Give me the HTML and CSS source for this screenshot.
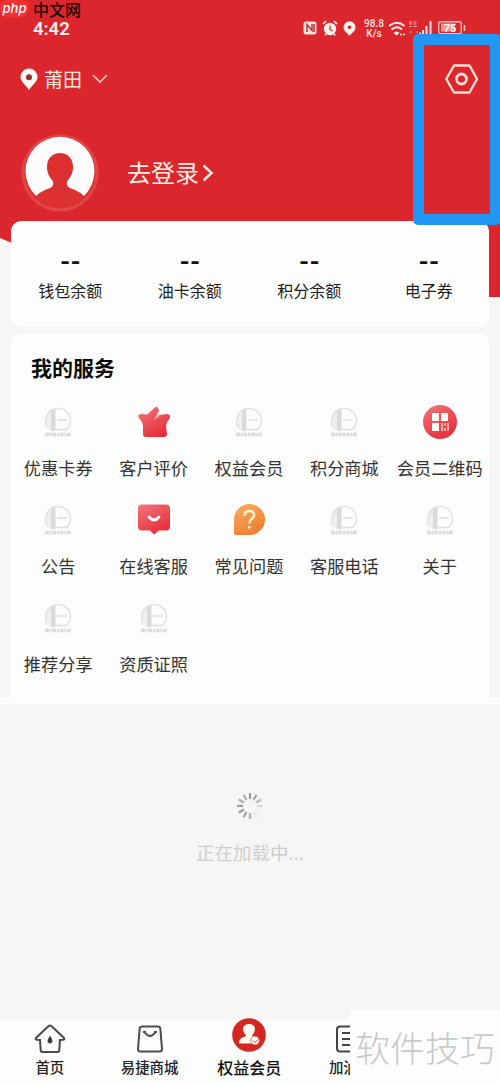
FILE: index.html
```html
<!DOCTYPE html>
<html lang="zh-CN">
<head>
<meta charset="utf-8">
<title>我的</title>
<link rel="stylesheet" href="styles.css">
</head>
<body>
<svg class="defs" width="0" height="0">
  <defs>
    <linearGradient id="red" x1="0" y1="0" x2="0.6" y2="1"><stop offset="0" stop-color="#ef797b"/><stop offset="1" stop-color="#e92d3a"/></linearGradient>
    <linearGradient id="orange" x1="0" y1="0" x2="0.5" y2="1"><stop offset="0" stop-color="#f8b064"/><stop offset="1" stop-color="#ef7f31"/></linearGradient>
    <symbol id="blank" viewBox="0 0 34 34">
      <path d="M6 24C3 16 5 8 11 5v21z" fill="#efefef"/>
      <rect x="10" y="4" width="4.500" height="22" fill="#dadada"/>
      <path d="M5 22C3 10 9 3.500 17 3.500c9 0 14 7.500 12 16l-3 5" fill="none" stroke="#e2e2e2" stroke-width="1.500"/>
      <path d="M16 15h10M15 24.500h11" fill="none" stroke="#dedede" stroke-width="1.400"/>
      <path d="M4 29.500h26" fill="none" stroke="#dcdcdc" stroke-width="3.500" stroke-dasharray="4 .7 2 .6"/>
    </symbol>
  </defs>
</svg>
<div class="phone">
  <header class="hero">
    <div class="status">
      <span class="clock">4:42</span>
      <div class="status-icons">
        <svg width="14" height="14" viewBox="0 0 14 14"><rect x="0.5" y="0.5" width="13" height="13" rx="2.5" fill="#fbe3dc"/><path d="M4 11V3.5l5 6V3M11 3v8" fill="none" stroke="#c93036" stroke-width="1.5"/></svg>
        <svg class="alarm" width="16" height="16" viewBox="0 0 16 16"><circle cx="8" cy="9" r="6.2" fill="#fff0e9"/><path d="M1 4l3-3M15 4l-3-3M4 14l-1 1.500M12 14l1 1.500" stroke="#fff0e9" stroke-width="1.7"/><path d="M8 5.500v4l2.500 1.500" fill="none" stroke="#c93036" stroke-width="1.300"/></svg>
        <svg class="place" width="13" height="15" viewBox="0 0 13 15"><path d="M6.500 0.300a6 6 0 0 1 6 6c0 3.700-3.500 5.700-6 8.500C4 12 .5 10 .5 6.300a6 6 0 0 1 6-6z" fill="#fff0e9"/><circle cx="6.500" cy="6.200" r="1.800" fill="#b82c31"/></svg>
        <span class="speed">98.8<br>K/s</span>
        <svg class="wifi" width="18" height="16" viewBox="0 0 18 16"><path d="M1 5q7.500-6.500 15.500 0M3.500 8.500q5-4.500 10.500 0" fill="none" stroke="#fff0e9" stroke-width="1.800"/><path d="M5.500 12q3-3 6 0l-3 2.500z" fill="#fff0e9"/><path d="M12 13.500h5" stroke="#fff0e9" stroke-width="1.700" stroke-dasharray="2 1"/></svg>
        <svg class="signal" width="24" height="16" viewBox="0 0 24 16"><path d="M1 2h3M1 4h3M1 6.500h3M5.500 2h3M5.500 4h3M5.500 6.500h3M2 12h2M8 12h2" stroke="#f3b4ac" stroke-width="1.200"/><path d="M12 15v-2.500M15 15v-5M18.500 15V6M22.500 15V1" stroke="#fbe0da" stroke-width="2"/></svg>
        <svg class="battery" width="28" height="15" viewBox="0 0 28 15"><rect x=".7" y=".7" width="22.600" height="12" rx="2" fill="none" stroke="#f5c3bb" stroke-width="1.400"/><rect x="3" y="2.500" width="14" height="8" fill="#ee9991"/><text x="12" y="11" text-anchor="middle" font-size="11" font-weight="700" fill="#fff4ef">75</text><path d="M26.500 4v6" stroke="#f5c3bb" stroke-width="1.600"/></svg>
      </div>
    </div>
    <div class="topbar">
      <svg width="18" height="23" viewBox="0 0 18 23"><path d="M9 .5a8.500 8.500 0 0 1 8.500 8.500c0 5-5 7.500-8.500 13C5.500 16.500.5 14 .5 9A8.500 8.500 0 0 1 9 .5z" fill="#fff9f6"/><circle cx="9" cy="9.200" r="3" fill="#903238"/></svg>
      <span class="city">莆田</span>
      <svg class="chevron" width="16" height="10" viewBox="0 0 16 10"><path d="M1 1l7 7 7-7" fill="none" stroke="#f8c9b8" stroke-width="1.600"/></svg>
      <svg class="settings" width="33" height="30" viewBox="0 0 33 30"><path d="M9 1.500h15.500L32 15l-7.500 13.500H9L1.300 15z" fill="none" stroke="#ffdfcf" stroke-width="2.400" stroke-linejoin="round"/><circle cx="16.500" cy="15" r="5" fill="none" stroke="#ffdfcf" stroke-width="2.800"/></svg>
    </div>
    <div class="profile">
      <svg width="78" height="78" viewBox="0 0 78 78"><circle cx="39" cy="39" r="37" fill="#dc3030" stroke="#e14646" stroke-width="3"/><path d="M15 62A34.500 34.500 0 1 1 63 62C59 58 54 56 49 54c-4-2-4-5-2-8 4-5 5-9 5-13 0-9-6-14-13-14s-13 5-13 14c0 4 1 8 5 13 2 3 2 6-2 8-5 2-10 4-14 8z" fill="#fbfbfb"/></svg>
      <span class="login">去登录</span>
      <svg class="arrow" width="12" height="18" viewBox="0 0 12 18"><path d="M1.500 1.500L9.500 9l-8 7.500" fill="none" stroke="#ffe9dd" stroke-width="2.500"/></svg>
    </div>
  </header>
  <section class="balances">
    <div class="balance"><b>--</b><span>钱包余额</span></div>
    <div class="balance"><b>--</b><span>油卡余额</span></div>
    <div class="balance"><b>--</b><span>积分余额</span></div>
    <div class="balance"><b>--</b><span>电子券</span></div>
  </section>
  <section class="services">
    <h2>我的服务</h2>
    <div class="grid">
      <div class="item"><svg><use href="#blank"/></svg><span>优惠卡券</span></div>
      <div class="item"><svg viewBox="0 0 34 34"><path d="M18 2.500Q20 1 21 3l1 2q.5 1-1 2.500L19.500 10q1 1 3 0l7-1q4 0 3.500 3.500-.5 2-3 4.500l-1 4 1 8q0 3-3 3H9q-3 0-3-3V21l-1-4-3-4q-2-3.500 2-4l6 .5z" fill="url(#red)"/><path d="M17 15q1-4 5-6l3-.5q-4 4-8 6.500z" fill="#f9b3b1"/></svg><span>客户评价</span></div>
      <div class="item"><svg><use href="#blank"/></svg><span>权益会员</span></div>
      <div class="item"><svg><use href="#blank"/></svg><span>积分商城</span></div>
      <div class="item"><svg viewBox="0 0 34 34"><circle cx="17" cy="17" r="17" fill="url(#red)"/><path d="M9 8h7v8H9zM18 8h7v8h-7zM9 18h7v8H9z" fill="#fff9f7"/><path d="M19 18v8M22 18v3M25 18v8M22 23v3" stroke="#ffc3b4" stroke-width="1.700"/></svg><span>会员二维码</span></div>
      <div class="item"><svg><use href="#blank"/></svg><span>公告</span></div>
      <div class="item"><svg viewBox="0 0 34 34"><path d="M5 1.500h24q4 0 4 4v18q0 4-4 4h-7l-5 4-4-4H5q-4 0-4-4v-18q0-4 4-4z" fill="url(#red)"/><path d="M12 14q5 6 10 0" fill="none" stroke="#fff" stroke-width="2.800" stroke-linecap="round"/></svg><span>在线客服</span></div>
      <div class="item"><svg viewBox="0 0 34 34"><path d="M2 30V16A15.500 15.500 0 1 1 17 32H4q-2 0-2-2z" fill="url(#orange)"/><path d="M12.500 13q0-5 4.800-5t4.800 4.300c0 3-4.800 3.700-4.800 8.200M17.300 23v2.500" fill="none" stroke="#fff2c9" stroke-width="2.500"/></svg><span>常见问题</span></div>
      <div class="item"><svg><use href="#blank"/></svg><span>客服电话</span></div>
      <div class="item"><svg><use href="#blank"/></svg><span>关于</span></div>
      <div class="item"><svg><use href="#blank"/></svg><span>推荐分享</span></div>
      <div class="item"><svg><use href="#blank"/></svg><span>资质证照</span></div>
    </div>
  </section>
  <div class="band"></div>
  <main class="loading">
    <svg width="28" height="28" viewBox="-14 -14 28 28" stroke-width="2.200" stroke="#9b9b9b">
      <path d="M0-7V-13"/><path d="M0-7V-13" transform="rotate(30)" opacity=".9"/><path d="M0-7V-13" transform="rotate(60)" opacity=".65"/><path d="M0-7V-13" transform="rotate(90)" opacity=".35"/><path d="M0-7V-13" transform="rotate(120)" opacity=".08"/><path d="M0-7V-13" transform="rotate(150)" opacity=".12"/><path d="M0-7V-13" transform="rotate(180)" opacity=".75"/><path d="M0-7V-13" transform="rotate(210)"/><path d="M0-7V-13" transform="rotate(240)"/><path d="M0-7V-13" transform="rotate(270)"/><path d="M0-7V-13" transform="rotate(300)" opacity=".8"/><path d="M0-7V-13" transform="rotate(330)" opacity=".8"/>
    </svg>
    <p>正在加载中...</p>
  </main>
  <nav class="tabs">
    <div class="tab"><svg width="32" height="30" viewBox="0 0 32 30"><path d="M16 1.500Q17 1.500 19 3.500L30 14q1 1.500-1 1.800l-3 .2-.7 10q0 2-2 2H8.700q-2 0-2-2L6 16l-3-.2q-2-.3-1-1.800L13 3.500q2-2 3-2z" fill="none" stroke="#4a4a4a" stroke-width="2"/><path d="M16 12.500q4 6.500 0 6.500t0-6.500z" fill="#333" stroke="#333"/></svg><span>首页</span></div>
    <div class="tab"><svg width="26" height="30" viewBox="0 0 26 30"><path d="M5 2.500h16q2 0 2.300 2L25 25q0 2.500-2 2.500H3Q1 27.500 1 25L2.700 4.500q.3-2 2.300-2z" fill="none" stroke="#4c4c4c" stroke-width="2"/><path d="M7.500 8q5.500 8 11 0M6 8h3M17 8h3" fill="none" stroke="#4c4c4c" stroke-width="1.900"/></svg><span>易捷商城</span></div>
    <div class="tab active"><svg width="34" height="34" viewBox="0 0 34 34"><circle cx="17" cy="17" r="16.800" fill="#d3281f"/><path d="M17 6c6 0 7 5 5 8.500-1 2-3 3-1 4 3 1 6 2 6 7H7c0-5 3-6 6-7 2-1 0-2-1-4-2-3.500-1-8.500 5-8.500z" fill="#fff7ee"/><circle cx="23" cy="22.500" r="4.200" fill="#fff" stroke="#d68468"/><path d="M21 22.500l2 2 3-3" fill="none" stroke="#c53a28"/></svg><span>权益会员</span></div>
    <div class="tab fuel"><svg width="28" height="30" viewBox="0 0 28 30"><path d="M5 2.500h18q3 0 3 3v19q0 3-3 3H5q-3 0-3-3v-19q0-3 3-3z" fill="none" stroke="#444" stroke-width="2"/><path d="M7 9h12M7 15h12M7 21h12" stroke="#444" stroke-width="2"/></svg><span>加油</span></div>
    <div class="tab"></div>
  </nav>
  <div class="highlight"></div>
  <div class="site"><span class="php">php</span><span class="cn">中文网</span></div>
  <div class="watermark">软件技巧</div>
</div>
</body>
</html>
```

FILE: styles.css
```css
* { box-sizing: border-box; }
body {
  margin: 0;
  font-family: "Noto Sans CJK SC", sans-serif;
  color: #333;
}
svg { display: block; flex: none; }
.defs { position: absolute; }
.phone {
  position: relative;
  isolation: isolate;
  width: 500px;
  height: 1084px;
  overflow: hidden;
  display: flex;
  flex-direction: column;
  background: #f6f6f6;
}
.phone::before {
  content: "";
  position: absolute;
  z-index: -1;
  inset: 0 0 auto;
  height: 297px;
  background: #dc262d;
  clip-path: polygon(0 0, 100% 0, 100% 100%, 480px 100%, 12px 243px, 0 238px);
}
.hero { height: 221px; padding-top: 19px; }
.status { display: flex; height: 20px; }
.clock {
  margin-left: 33px;
  width: 270px;
  font: 600 18.5px/20px Roboto, sans-serif;
  color: #fff0e8;
}
.status-icons { display: flex; padding-top: 2px; }
.alarm { margin-left: 5px; margin-top: -1px; }
.place { margin-left: 5px; }
.speed {
  margin: -2px 0 0 7px;
  width: 22px;
  font: 500 10px/10px Roboto, sans-serif;
  text-align: center;
  color: #ffe9e2;
}
.wifi { margin-left: 3px; }
.signal { margin-left: 2px; margin-top: -1px; }
.battery { margin-left: 6px; font-family: Roboto, sans-serif; }
.topbar { display: flex; align-items: center; height: 40px; margin-top: 20px; padding: 0 22px 0 20px; }
.city { margin: -2px 0 0 6px; font-size: 19px; color: #ffeadf; }
.chevron { margin-left: 10px; }
.settings { margin-left: auto; }
.profile { display: flex; align-items: center; height: 78px; margin-top: 35px; padding-left: 21px; }
.login { margin: -4px 0 0 28px; font-size: 24px; color: #fff0e4; }
.arrow { margin-left: 3px; }
.balances {
  display: grid;
  grid-template-columns: repeat(4, 1fr);
  width: 478px;
  height: 106px;
  margin-left: 11px;
  border-radius: 10px;
  background: #fdfdfd;
}
.balance { display: flex; flex-direction: column; align-items: center; padding-top: 24px; }
.balance b { font: 700 26px/28px "Noto Sans CJK SC", sans-serif; color: #111; letter-spacing: 1px; }
.balance span { margin: 6px 1px 0 0; font-size: 16px; line-height: 22px; color: #1c1c1c; }
.services {
  width: 478px;
  height: 363px;
  margin: 7px 0 0 11px;
  padding-top: 17px;
  background: #fdfdfd;
  border-radius: 8px 8px 0 0;
}
.services h2 { margin: 0 0 0 20px; font-size: 21px; line-height: 32px; font-weight: 700; color: #0c0c0c; }
.grid { display: grid; grid-template-columns: repeat(5, 95.4px); grid-auto-rows: 98px; margin: 22px 0 0 -.5px; }
.item { display: flex; flex-direction: column; align-items: center; }
.item svg { width: 34px; height: 34px; }
.item span { margin-top: 16px; font-size: 17.2px; line-height: 26px; white-space: nowrap; }
.band { height: 7px; background: #fdfdfd; }
.loading { flex: 1; display: flex; flex-direction: column; align-items: center; padding-top: 88px; }
.loading p { margin: 19px 0 0; font-size: 18.5px; line-height: 26px; color: #cecece; }
.tabs { display: grid; grid-template-columns: repeat(5, 99.7px); height: 64px; background: #fdfdfd; }
.tab { display: flex; flex-direction: column; align-items: center; padding-top: 4px; }
.tab span { margin-top: 3px; font-size: 14.4px; line-height: 20px; font-weight: 500; color: #222; white-space: nowrap; }
.tab.active { padding-top: 0; margin-top: -2px; }
.tab.active span { font-size: 16px; margin-top: 5px; color: #111; }
.tab.fuel span { width: 40px; }
.highlight { position: absolute; left: 413px; top: 34px; width: 88px; height: 191px; border: 11px solid #2196f3; border-radius: 5px; }
.site { position: absolute; left: 0; top: 0; display: flex; align-items: flex-start; height: 18px; }
.php {
  width: 29px;
  height: 18px;
  border-radius: 10px 10px 15px 15px;
  background: #f13232;
  font: italic 500 13px/16px Inter, sans-serif;
  text-align: center;
  color: #fff;
}
.cn { margin-left: 4px; font-size: 16px; line-height: 18px; font-weight: 500; color: #100; }
.watermark {
  position: absolute;
  right: 0;
  bottom: 0;
  width: 150px;
  height: 74px;
  padding-left: 5px;
  background: #fdfdfd;
  font-size: 35px;
  line-height: 74px;
  font-weight: 300;
  color: #c9c9c9;
  white-space: nowrap;
}
```
